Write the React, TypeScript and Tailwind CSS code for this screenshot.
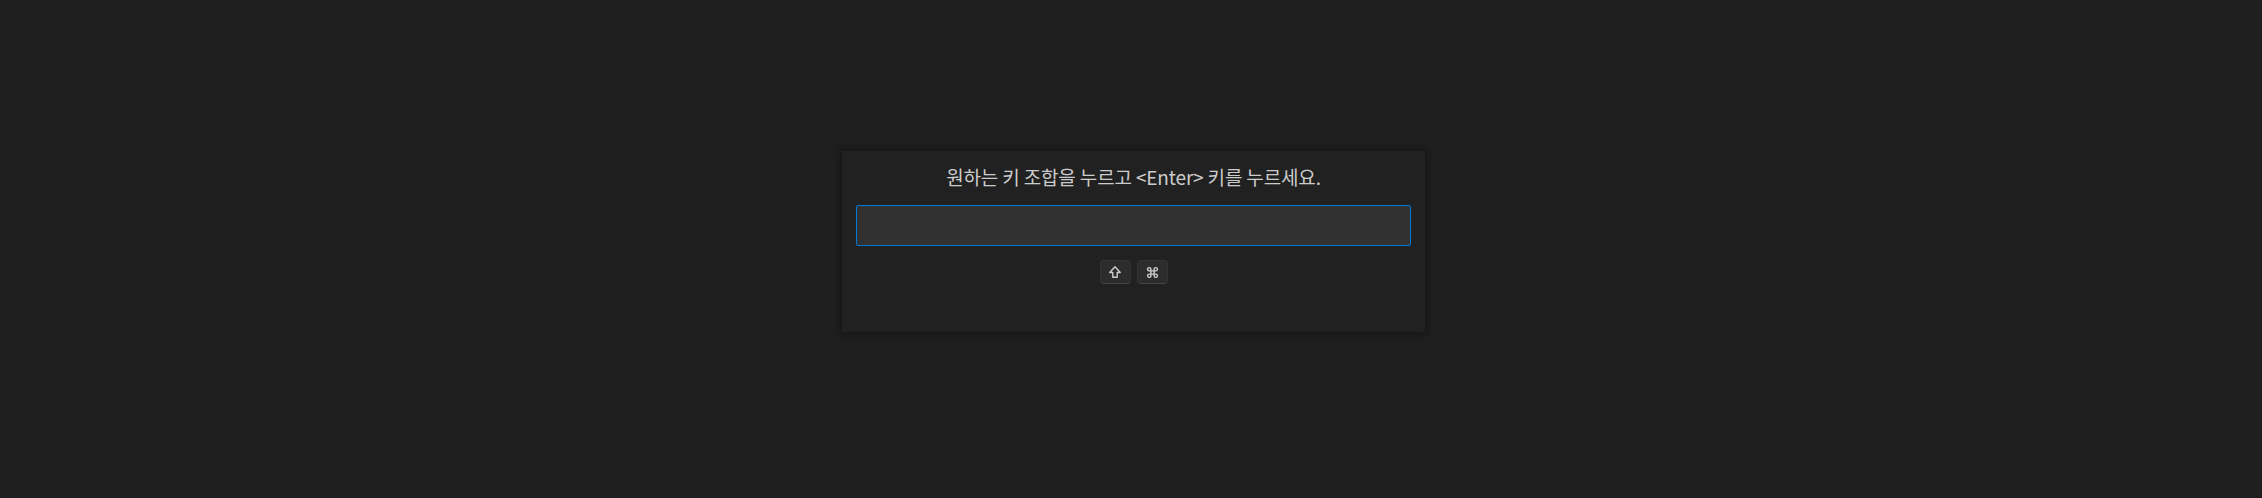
import { Command } from 'lucide-react'

export default function App() {
  return (
    <div
      className="w-full h-[498px] bg-[#1f1f1f] flex justify-center"
      style={{ fontFamily: '"Noto Sans CJK KR", "Noto Sans", sans-serif' }}
    >
      <div className="mt-[151px] ml-[5px] w-[583px] h-[181px] bg-[#212121] shadow-[0_0_8px_2px_rgba(0,0,0,0.36)] px-[14px] pt-[12px] flex flex-col items-center">
        <div className="text-[19px] leading-[28px] tracking-[-0.15px] text-[#cccccc] text-center">
          원하는 키 조합을 누르고 &lt;Enter&gt; 키를 누르세요.
        </div>
        <div className="mt-[14px] w-full h-[41px] bg-[#313131] border border-[#0078d4] rounded-[2px]" />
        <div className="mt-[14px] flex gap-[6px]">
          <span className="w-[31px] h-[24px] rounded-[4px] bg-[#2c2c2c] border border-[#333333] border-b-[#444444] flex items-center justify-center text-[#cccccc]">
            <svg width="14" height="14" viewBox="0 0 16 16" fill="none" stroke="currentColor" strokeWidth="1.6" strokeLinejoin="round">
              <path d="M8 2 L14 8.5 H10.5 V14 H5.5 V8.5 H2 Z" />
            </svg>
          </span>
          <span className="w-[31px] h-[24px] rounded-[4px] bg-[#2c2c2c] border border-[#333333] border-b-[#444444] flex items-center justify-center text-[#cccccc]">
            <Command size={13} strokeWidth={2.6} />
          </span>
        </div>
      </div>
    </div>
  )
}
